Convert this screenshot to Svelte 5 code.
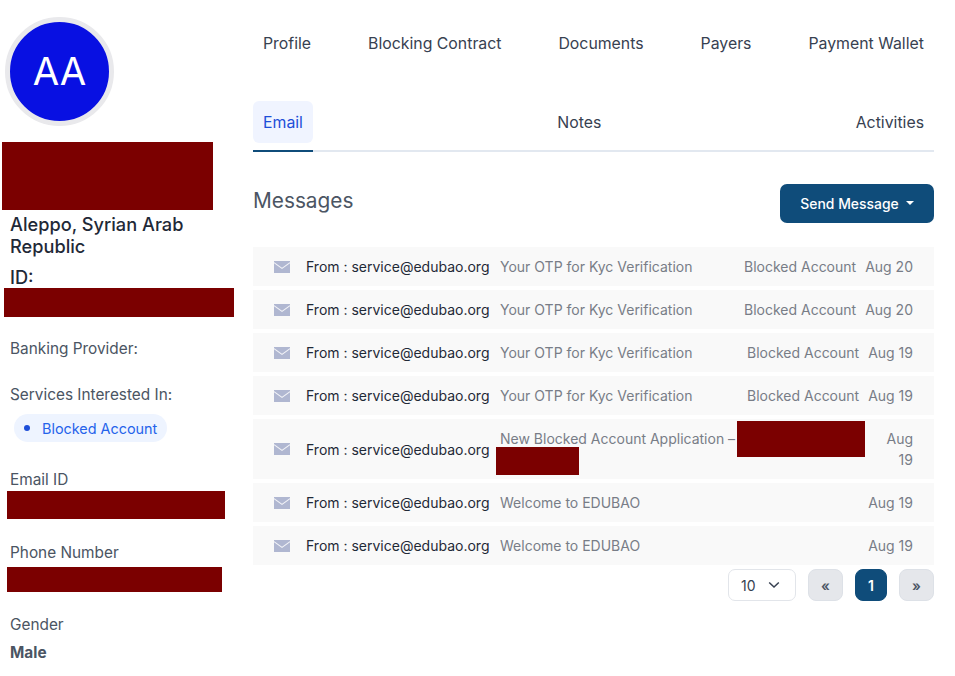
<script>
	const tabs = ['Profile', 'Blocking Contract', 'Documents', 'Payers', 'Payment Wallet'];

	const messages = [
		{ subject: 'Your OTP for Kyc Verification', tag: 'Blocked Account', date: 'Aug 20' },
		{ subject: 'Your OTP for Kyc Verification', tag: 'Blocked Account', date: 'Aug 20' },
		{ subject: 'Your OTP for Kyc Verification', tag: 'Blocked Account', date: 'Aug 19' },
		{ subject: 'Your OTP for Kyc Verification', tag: 'Blocked Account', date: 'Aug 19' },
		{ subject: 'New Blocked Account Application –', tag: '', date: 'Aug 19', redacted: true },
		{ subject: 'Welcome to EDUBAO', tag: '', date: 'Aug 19' },
		{ subject: 'Welcome to EDUBAO', tag: '', date: 'Aug 19' }
	];
</script>

<div class="page">
	<aside class="sidebar">
		<div class="avatar">AA</div>
		<div class="redact name-block"></div>
		<h2 class="location">Aleppo, Syrian Arab Republic</h2>
		<h2 class="id-label">ID:</h2>
		<div class="redact id-block"></div>

		<p class="label banking">Banking Provider:</p>
		<p class="label services">Services Interested In:</p>
		<span class="pill"><i class="dot"></i>Blocked Account</span>

		<p class="label email">Email ID</p>
		<div class="redact email-block"></div>
		<p class="label phone">Phone Number</p>
		<div class="redact phone-block"></div>
		<p class="label gender">Gender</p>
		<p class="label male">Male</p>
	</aside>

	<main class="main">
		<nav class="top-tabs">
			{#each tabs as tab (tab)}
				<span>{tab}</span>
			{/each}
		</nav>

		<nav class="sub-tabs">
			<span class="active">Email</span>
			<span>Notes</span>
			<span>Activities</span>
		</nav>

		<header class="head">
			<h1>Messages</h1>
			<button type="button" class="send">Send Message<i class="caret"></i></button>
		</header>

		<ul class="list">
			{#each messages as msg}
				<li class:tall={msg.redacted}>
					<svg class="mail" viewBox="0 0 16 12" width="16" height="12" aria-hidden="true">
						<rect width="16" height="12" fill="#b0b7d1" />
						<path d="M0 1.6 8 7.4l8-5.8" fill="none" stroke="#f3f4f8" stroke-width="1.1" />
					</svg>
					<span class="from">From : service@edubao.org</span>
					<span class="subject">
						{msg.subject}
						{#if msg.redacted}
							<i class="redact over-a"></i>
							<i class="redact over-b"></i>
						{/if}
					</span>
					{#if msg.tag}<span class="tag">{msg.tag}</span>{/if}
					<span class="date">{msg.date}</span>
				</li>
			{/each}
		</ul>

		<div class="pager">
			<div class="size">
				10
				<svg viewBox="0 0 12 8" width="12" height="8" aria-hidden="true">
					<path d="M1.2 1.5 6 6l4.8-4.5" fill="none" stroke="#374151" stroke-width="1.5" />
				</svg>
			</div>
			<button type="button" class="page-btn arrow">«</button>
			<button type="button" class="page-btn current">1</button>
			<button type="button" class="page-btn arrow">»</button>
		</div>
	</main>
</div>

<style>
	:global(body) {
		font-family: Inter, 'Liberation Sans', sans-serif;
		background: #fff;
	}
	.page {
		display: flex;
		width: 955px;
		height: 676px;
		overflow: hidden;
	}
	.redact {
		display: block;
		background: #7b0000;
	}

	/* left column */
	.sidebar {
		flex: none;
		width: 253px;
		box-sizing: border-box;
		padding-top: 17px;
	}
	.avatar {
		box-sizing: border-box;
		width: 109px;
		height: 109px;
		margin-left: 5px;
		border: 5px solid #e9e9ec;
		border-radius: 50%;
		background: #0810e2;
		color: #fff;
		font-size: 38.4px;
		line-height: 99px;
		text-align: center;
	}
	.name-block {
		width: 211px;
		height: 68px;
		margin: 16px 0 0 2px;
	}
	.location,
	.id-label {
		margin: 0 0 0 10px;
		width: 200px;
		color: #1f2937;
		font-size: 18.2px;
		font-weight: 500;
		line-height: 22px;
	}
	.location {
		margin-top: 3px;
	}
	.id-label {
		margin-top: 9px;
		height: 22px;
	}
	.id-block {
		width: 230px;
		height: 29px;
		margin-left: 4px;
	}
	.label {
		margin: 0 0 0 10px;
		color: #4b5563;
		font-size: 15.36px;
		line-height: 20px;
	}
	.banking {
		margin-top: 22px;
	}
	.services {
		margin-top: 26px;
	}
	.pill {
		display: inline-flex;
		align-items: center;
		height: 28px;
		margin: 9px 0 0 14px;
		padding: 0 10px;
		border-radius: 14px;
		background: #eef4ff;
		color: #2563eb;
		font-size: 14.4px;
	}
	.dot {
		width: 6px;
		height: 6px;
		margin-right: 12px;
		border-radius: 50%;
		background: #1d4ed8;
	}
	.email {
		margin-top: 28px;
	}
	.email-block {
		width: 218px;
		height: 28px;
		margin: 1px 0 0 7px;
	}
	.phone {
		margin-top: 24px;
	}
	.phone-block {
		width: 215px;
		height: 25px;
		margin: 4px 0 0 7px;
	}
	.gender {
		margin-top: 23px;
	}
	.male {
		margin-top: 8px;
		font-weight: 700;
	}

	/* right column */
	.main {
		flex: none;
		width: 681px;
	}
	.top-tabs,
	.sub-tabs {
		display: flex;
		justify-content: space-between;
		color: #374151;
		font-size: 15.84px;
	}
	.top-tabs {
		padding: 25px 10px 0;
		line-height: 38px;
	}
	.sub-tabs {
		height: 49px;
		margin-top: 38px;
		border-bottom: 2px solid #e2e8f0;
	}
	.sub-tabs span {
		height: 42px;
		padding: 0 10px;
		line-height: 44px;
	}
	.sub-tabs .active {
		position: relative;
		border-radius: 6px;
		background: #f0f4ff;
		color: #1d4ed8;
	}
	.sub-tabs .active::after {
		content: '';
		position: absolute;
		left: 0;
		right: 0;
		top: 49px;
		height: 2px;
		background: #0f4c7a;
	}
	.head {
		display: flex;
		align-items: center;
		justify-content: space-between;
		margin-top: 32px;
	}
	h1 {
		margin: 0;
		color: #4b5563;
		font-size: 20.8px;
		font-weight: 400;
		line-height: 32px;
		transform: translateY(-3px);
	}
	.send {
		display: flex;
		align-items: center;
		justify-content: center;
		width: 154px;
		height: 39px;
		padding: 0;
		border: 0;
		border-radius: 7px;
		background: #0f4c7a;
		color: #fff;
		font: 500 13.92px Inter, sans-serif;
	}
	.caret {
		margin-left: 7px;
		margin-top: -1px;
		border-top: 4px solid #fff;
		border-left: 4px solid transparent;
		border-right: 4px solid transparent;
	}
	.list {
		display: flex;
		flex-direction: column;
		gap: 4px;
		margin: 24px 0 0;
		padding: 0;
		list-style: none;
	}
	li {
		display: flex;
		align-items: center;
		height: 39px;
		padding: 0 21px;
		background: #f9f9f9;
		font-size: 14px;
		white-space: nowrap;
	}
	li.tall {
		height: 60px;
	}
	.mail {
		flex: none;
		margin-right: 16px;
	}
	.from {
		flex: none;
		width: 194px;
		color: #1f2937;
	}
	.subject {
		position: relative;
		flex: 1;
		color: #787d87;
	}
	.tall .subject {
		height: 42px;
		line-height: 22px;
		align-self: flex-start;
		margin-top: 9px;
	}
	.tag {
		margin-right: 9px;
		color: #787d87;
	}
	.date {
		color: #787d87;
	}
	.tall .date {
		width: 27px;
		line-height: 21px;
		text-align: right;
		white-space: normal;
	}
	.over-a {
		position: absolute;
		left: 237px;
		top: -7px;
		width: 128px;
		height: 36px;
	}
	.over-b {
		position: absolute;
		left: -4px;
		top: 19px;
		width: 83px;
		height: 28px;
	}
	.pager {
		display: flex;
		justify-content: flex-end;
		gap: 12px;
		margin-top: 4px;
	}
	.size {
		box-sizing: border-box;
		display: flex;
		align-items: center;
		justify-content: space-between;
		width: 68px;
		height: 32px;
		padding: 0 15px 0 12px;
		border: 1px solid #e2e5ea;
		border-radius: 7px;
		color: #374151;
		font-size: 14px;
	}
	.page-btn {
		box-sizing: border-box;
		height: 32px;
		padding: 0;
		border: 1px solid #dde1e7;
		border-radius: 8px;
		font: 600 14px Inter, sans-serif;
	}
	.arrow {
		width: 35px;
		background: #e5e7eb;
		color: #4b5563;
	}
	.current {
		width: 32px;
		border-color: #0f4c7a;
		background: #0f4c7a;
		color: #fff;
	}
</style>
